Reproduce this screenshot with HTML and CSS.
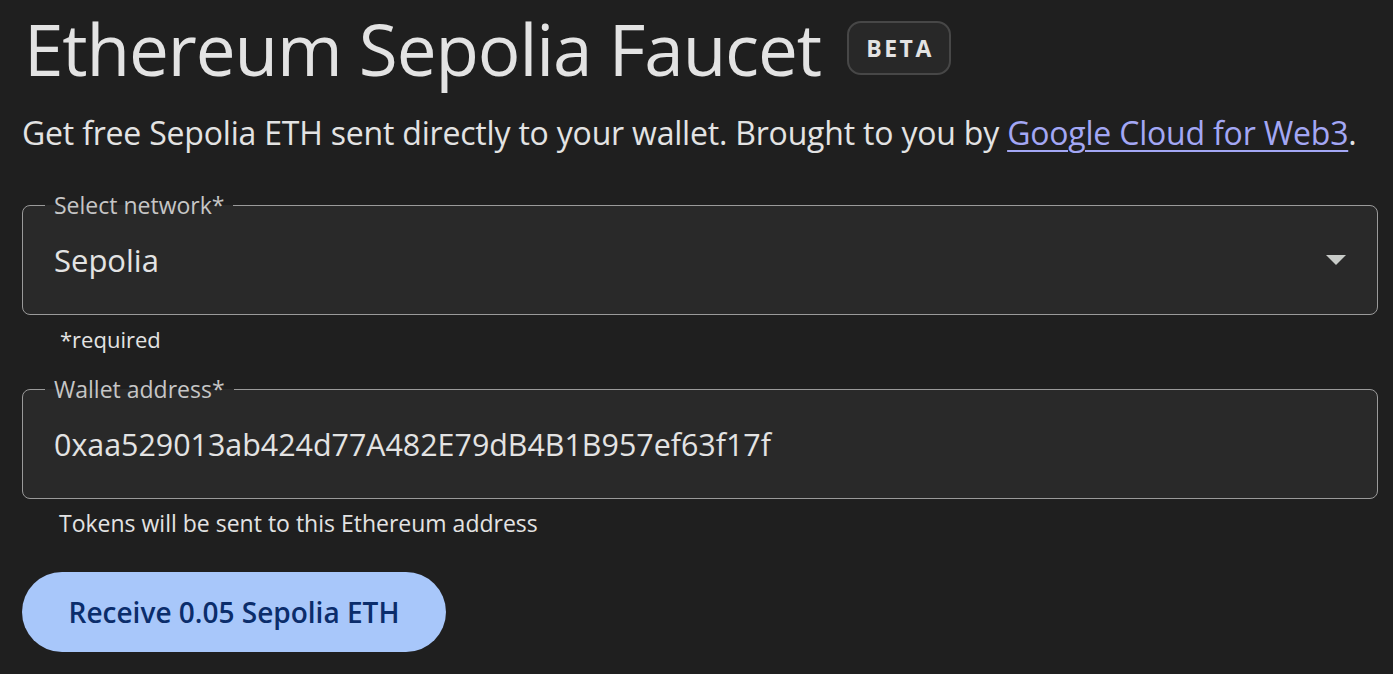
FILE: index.html
```html
<!DOCTYPE html>
<html lang="en">
<head>
<meta charset="utf-8">
<title>Ethereum Sepolia Faucet</title>
<link rel="stylesheet" href="styles.css">
</head>
<body>
<main class="page">
  <header class="title-row">
    <h1 class="title">Ethereum Sepolia Faucet</h1>
    <span class="badge">BETA</span>
  </header>
  <p class="subtitle">Get free Sepolia ETH sent directly to your wallet. Brought to you by <a href="#" class="link">Google Cloud for Web3</a>.</p>

  <div class="field field-network">
    <div class="box">
      <span class="label">Select network*</span>
      <span class="value">Sepolia</span>
      <svg class="arrow" width="20" height="10" viewBox="0 0 20 10"><path d="M0 0 L20 0 L10 10 Z" fill="#c8cbc8"/></svg>
    </div>
    <div class="hint hint-req">*required</div>
  </div>

  <div class="field field-wallet">
    <div class="box">
      <span class="label">Wallet address*</span>
      <span class="value value-address">0xaa529013ab424d77A482E79dB4B1B957ef63f17f</span>
    </div>
    <div class="hint">Tokens will be sent to this Ethereum address</div>
  </div>

  <button class="cta">Receive 0.05 Sepolia ETH</button>
</main>
</body>
</html>
```

FILE: styles.css
```css
html, body {
  margin: 0;
  padding: 0;
  background: #1f1f1f;
}
body {
  font-family: "Open Sans", Roboto, sans-serif;
  color: #e3e3e3;
}
.page {
  padding: 0 15px 0 22px;
}
.title-row {
  display: flex;
  align-items: center;
  gap: 26px;
  height: 96px;
}
.title {
  margin: 0;
  font-size: 71px;
  font-weight: 400;
  color: #e3e3e3;
  line-height: 1;
  letter-spacing: -1.1px;
  padding-left: 2px;
}
.badge {
  display: inline-flex;
  align-items: center;
  justify-content: center;
  width: 104px;
  height: 54px;
  padding-left: 2px;
  box-sizing: border-box;
  border: 2px solid #474747;
  border-radius: 14px;
  background: #282828;
  font-size: 23px;
  font-weight: 700;
  letter-spacing: 2.5px;
  color: #e3e3e3;
}
.subtitle {
  margin: 10px 0 0 0;
  font-size: 32px;
  line-height: 54px;
  letter-spacing: -0.2px;
  color: #e3e3e3;
}
.link {
  color: #a3a7f5;
  text-decoration: underline;
  text-underline-offset: 5px;
  text-decoration-thickness: 2px;
}
.field-network {
  margin-top: 45px;
}
.field-wallet {
  margin-top: 35px;
}
.box {
  position: relative;
  display: flex;
  align-items: center;
  justify-content: space-between;
  padding: 0 31px 0 31px;
  border: 1.5px solid #9a9a9a;
  border-radius: 8px;
  background: #292929;
  height: 110px;
  box-sizing: border-box;
}
.label {
  position: absolute;
  left: 22px;
  top: -16px;
  padding: 0 9px;
  background: linear-gradient(#1f1f1f 0, #1f1f1f 15px, #292929 15px);
  font-size: 23px;
  line-height: 30px;
  color: #c6c6c6;
}
.value {
  font-size: 31px;
  color: #e3e3e3;
}
.value-address {
  font-size: 30.4px;
}
.arrow {
  display: block;
}
.hint {
  font-size: 23px;
  color: #e3e3e3;
  padding-left: 37px;
  margin-top: 9px;
  line-height: 30px;
}
.hint-req {
  font-size: 22px;
  padding-left: 38px;
}
.cta {
  margin-top: 34px;
  width: 424px;
  height: 80px;
  border: none;
  border-radius: 40px;
  background: #a8c7fa;
  color: #0b2d6b;
  font-family: "Open Sans", Roboto, sans-serif;
  font-size: 28px;
  font-weight: 600;
  cursor: pointer;
}
```
